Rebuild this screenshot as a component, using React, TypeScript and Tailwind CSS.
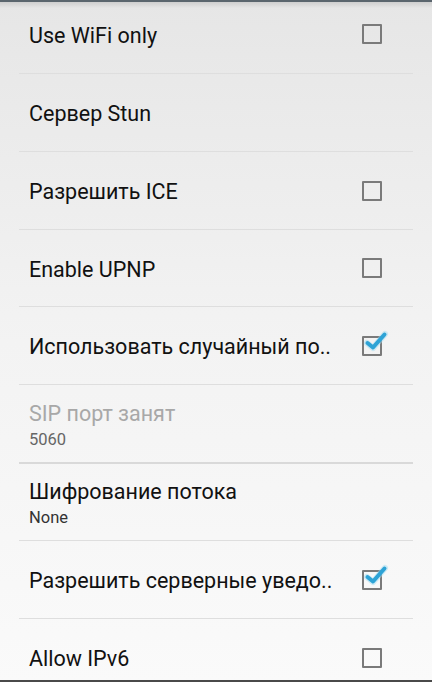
import React from "react";

type Row = { title: string; sub?: string; check?: "on" | "off"; disabled?: boolean; thick?: boolean; h: string };

const rows: Row[] = [
  { title: "Use WiFi only", check: "off", h: "h-[78px]" },
  { title: "Сервер Stun", h: "h-[77px]" },
  { title: "Разрешить ICE", check: "off", h: "h-[77px]" },
  { title: "Enable UPNP", check: "off", h: "h-[76px]" },
  { title: "Использовать случайный по..", check: "on", h: "h-[77px]" },
  { title: "SIP порт занят", sub: "5060", disabled: true, thick: true, h: "h-[77px]" },
  { title: "Шифрование потока", sub: "None", h: "h-[76px]" },
  { title: "Разрешить серверные уведо..", check: "on", h: "h-[77px]" },
  { title: "Allow IPv6", check: "off", h: "h-[77px]" },
];

function Box({ on }: { on: boolean }) {
  return (
    <div className="relative w-[20px] h-[20px] border-2 border-[#7a7a7a] rounded-[1px]">
      {on && (
        <svg className="absolute left-[-1px] top-[-9px]" width="26" height="26" viewBox="0 0 26 26">
          <path d="M4 14 L10 19 L22 5" fill="none" stroke="#9fdcf2" strokeWidth="6" strokeLinecap="round" strokeLinejoin="round" opacity="0.5" />
          <path d="M4.5 14 L10 18.5 L21.5 5.5" fill="none" stroke="#2ea3d6" strokeWidth="4" strokeLinecap="round" strokeLinejoin="round" />
        </svg>
      )}
    </div>
  );
}

export default function App() {
  return (
    <div
      className="relative w-[432px] h-[682px] overflow-hidden bg-gradient-to-b from-[#e6e6e6] via-[#f3f3f3] to-[#fafafa]"
      style={{ fontFamily: "Roboto, 'Noto Sans', sans-serif" }}
    >
      <div className="absolute top-0 left-0 right-0 h-[2px] bg-[#5b666e]" />
      <div className="absolute top-[2px] left-0 right-0 h-[6px] bg-gradient-to-b from-[#cfcfcf] to-transparent" />
      <div className="flex flex-col mt-[-5px]">
        {rows.map((r, i) => (
          <div key={i} className="flex flex-col">
            <div className={`${r.h} flex items-center pl-[29px] pr-[50px]`}>
              <div className="flex-1 flex flex-col min-w-0 pt-[3px]">
                <div className={`text-[21.5px] leading-[26px] whitespace-nowrap ${r.disabled ? "text-[#a8a8a8]" : "text-[#111]"}`}>
                  {r.title}
                </div>
                {r.sub && (
                  <div className={`text-[16.5px] leading-[20px] mt-[3px] ${r.disabled ? "text-[#666]" : "text-[#333]"}`}>{r.sub}</div>
                )}
              </div>
              {r.check && <Box on={r.check === "on"} />}
            </div>
            {i < rows.length - 1 && (
              <div className={`mx-[19px] ${r.thick ? "h-[2px] bg-[#d9d9d9]" : "h-px bg-[#dedede]"}`} />
            )}
          </div>
        ))}
      </div>
      <div className="absolute bottom-0 left-0 right-0 h-[2px] bg-[#4a4a4a]" />
    </div>
  );
}
